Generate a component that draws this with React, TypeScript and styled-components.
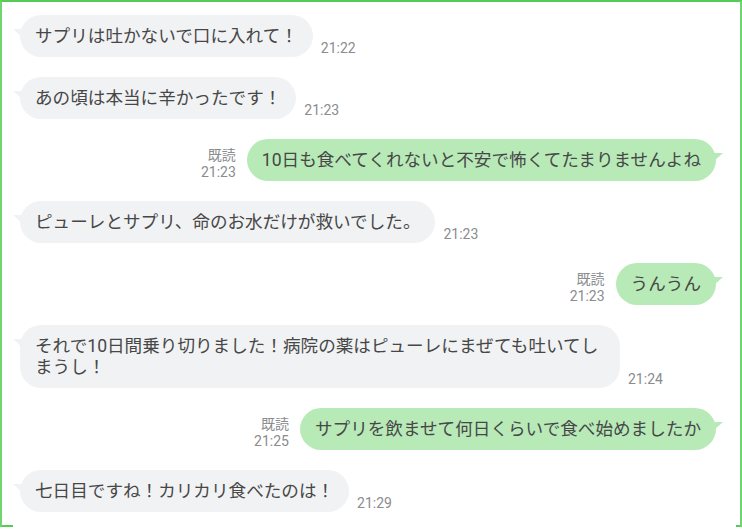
import React from "react";
import styled, { createGlobalStyle, css } from "styled-components";

const Global = createGlobalStyle`
  html, body { margin: 0; padding: 0; background: #ffffff; }
  body { font-family: Roboto, "Noto Sans CJK JP", sans-serif; }
`;

const Frame = styled.div`
  position: relative;
  box-sizing: border-box;
  width: 742px;
  height: 527px;
  border: 2px solid #6fd56f;
  border-top-color: #55cc55;
  border-bottom: none;
  background: #ffffff;
  overflow: hidden;

  &::after {
    content: "";
    position: absolute;
    left: 0;
    bottom: 0;
    width: 11px;
    height: 2px;
    background: #55cc55;
  }
  &::before {
    content: "";
    position: absolute;
    right: 0;
    bottom: 0;
    width: 4px;
    height: 2px;
    background: #55cc55;
  }
`;

const List = styled.div`
  display: flex;
  flex-direction: column;
  gap: 20px;
  padding: 13px 24px 0 18px;
`;

const Row = styled.div<{ $mine?: boolean }>`
  display: flex;
  align-items: flex-end;
  justify-content: ${(p) => (p.$mine ? "flex-end" : "flex-start")};
  gap: ${(p) => (p.$mine ? "11px" : "8px")};
`;

const Bubble = styled.div<{ $mine?: boolean }>`
  position: relative;
  box-sizing: border-box;
  max-width: 600px;
  padding: 10.5px 15px;
  border-radius: 21px;
  font-family: Roboto, "Noto Sans CJK JP", sans-serif;
  font-size: 17.6px;
  line-height: 21px;
  color: #474747;
  background: ${(p) => (p.$mine ? "#b8eab8" : "#f1f2f4")};

  &::before {
    content: "";
    position: absolute;
    top: 14px;
    width: 10px;
    height: 9px;
    background: inherit;
    ${(p) =>
      p.$mine
        ? css`
            right: -7px;
            clip-path: polygon(0 0, 100% 0, 0 100%);
          `
        : css`
            left: -7px;
            clip-path: polygon(0 0, 100% 0, 100% 100%);
          `}
  }
`;

const Meta = styled.div`
  display: flex;
  flex-direction: column;
  align-items: flex-end;
  font-family: Roboto, "Noto Sans CJK JP", sans-serif;
  font-size: 14px;
  line-height: 17px;
  color: #8a8c90;
`;

type Msg = { text: string; time: string; mine?: boolean };

const messages: Msg[] = [
  { text: "サプリは吐かないで口に入れて！", time: "21:22" },
  { text: "あの頃は本当に辛かったです！", time: "21:23" },
  { text: "10日も食べてくれないと不安で怖くてたまりませんよね", time: "21:23", mine: true },
  { text: "ピューレとサプリ、命のお水だけが救いでした。", time: "21:23" },
  { text: "うんうん", time: "21:23", mine: true },
  {
    text: "それで10日間乗り切りました！病院の薬はピューレにまぜても吐いてしまうし！",
    time: "21:24",
  },
  { text: "サプリを飲ませて何日くらいで食べ始めましたか", time: "21:25", mine: true },
  { text: "七日目ですね！カリカリ食べたのは！", time: "21:29" },
];

export default function App() {
  return (
    <>
      <Global />
      <Frame>
        <List>
          {messages.map((m, i) =>
            m.mine ? (
              <Row key={i} $mine>
                <Meta>
                  <span>既読</span>
                  <span>{m.time}</span>
                </Meta>
                <Bubble $mine>{m.text}</Bubble>
              </Row>
            ) : (
              <Row key={i}>
                <Bubble>{m.text}</Bubble>
                <Meta>
                  <span>{m.time}</span>
                </Meta>
              </Row>
            )
          )}
        </List>
      </Frame>
    </>
  );
}
